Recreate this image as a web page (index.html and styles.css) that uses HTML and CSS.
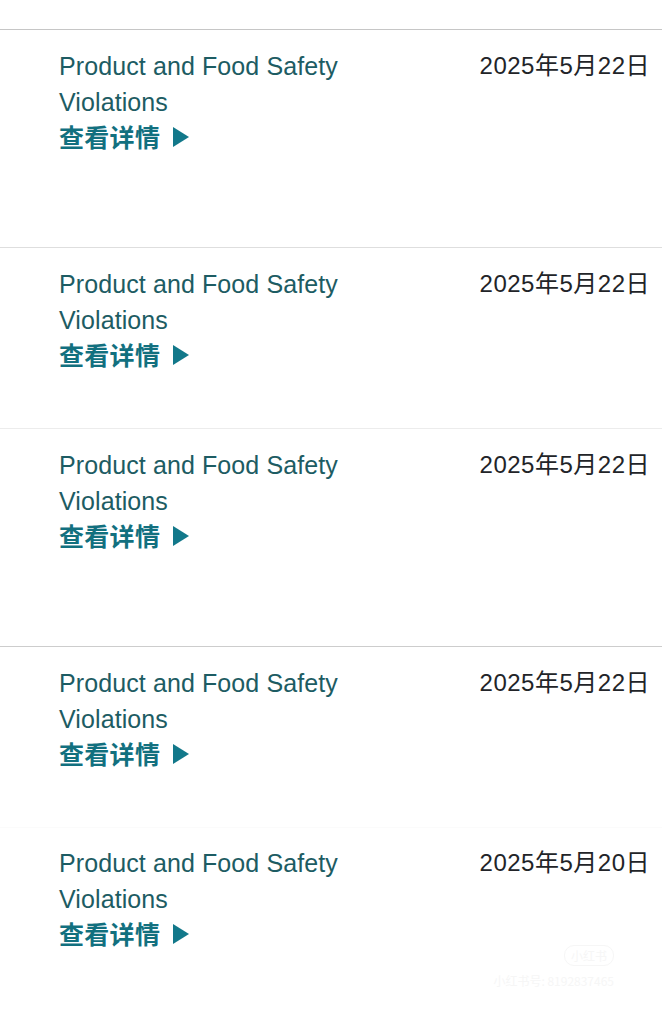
FILE: index.html
```html
<!DOCTYPE html>
<html lang="zh-CN">
<head>
<meta charset="utf-8">
<title>列表</title>
<link rel="stylesheet" href="styles.css">
</head>
<body>
<div class="page">
  <div class="top-gap"></div>
  <ul class="list">
    <li class="item item--tall item--b1">
      <div class="info">
        <div class="title">Product and Food Safety Violations</div>
        <a class="more" href="#">查看详情<svg class="arrow" viewBox="0 0 16 20" width="16" height="20"><path d="M0 0 L16 10 L0 20 Z"/></svg></a>
      </div>
      <div class="date">2025年5月22日</div>
    </li>
    <li class="item item--short item--b2">
      <div class="info">
        <div class="title">Product and Food Safety Violations</div>
        <a class="more" href="#">查看详情<svg class="arrow" viewBox="0 0 16 20" width="16" height="20"><path d="M0 0 L16 10 L0 20 Z"/></svg></a>
      </div>
      <div class="date">2025年5月22日</div>
    </li>
    <li class="item item--tall item--b3">
      <div class="info">
        <div class="title">Product and Food Safety Violations</div>
        <a class="more" href="#">查看详情<svg class="arrow" viewBox="0 0 16 20" width="16" height="20"><path d="M0 0 L16 10 L0 20 Z"/></svg></a>
      </div>
      <div class="date">2025年5月22日</div>
    </li>
    <li class="item item--short item--b4">
      <div class="info">
        <div class="title">Product and Food Safety Violations</div>
        <a class="more" href="#">查看详情<svg class="arrow" viewBox="0 0 16 20" width="16" height="20"><path d="M0 0 L16 10 L0 20 Z"/></svg></a>
      </div>
      <div class="date">2025年5月22日</div>
    </li>
    <li class="item item--last item--b5">
      <div class="info">
        <div class="title">Product and Food Safety Violations</div>
        <a class="more" href="#">查看详情<svg class="arrow" viewBox="0 0 16 20" width="16" height="20"><path d="M0 0 L16 10 L0 20 Z"/></svg></a>
      </div>
      <div class="date">2025年5月20日</div>
    </li>
  </ul>
  <div class="watermark">
    <span class="wm-logo">小红书</span>
    <span class="wm-id">小红书号: 8192837465</span>
  </div>
</div>
</body>
</html>
```
FILE: styles.css
```css
* { box-sizing: border-box; }
html, body {
  margin: 0;
  padding: 0;
  background: #ffffff;
}
body {
  font-family: "Liberation Sans", Arial, "Noto Sans CJK SC", sans-serif;
  width: 662px;
  height: 1024px;
  overflow: hidden;
}
.page {
  position: relative;
  height: 1024px;
}
.top-gap { height: 29px; }
.list {
  list-style: none;
  margin: 0;
  padding: 0;
}
.item {
  display: flex;
  justify-content: space-between;
  align-items: flex-start;
  padding: 18px 12px 0 59px;
  border-top: 1px solid #c8c8c8;
}
.item--tall { height: 218px; }
.item--short { height: 181px; }
.item--last { height: 196px; padding-top: 17px; }
.item--b1 { border-top-color: #c6c6c6; }
.item--b2 { border-top-color: #dedede; }
.item--b3 { border-top-color: #ececec; }
.item--b4 { border-top-color: #cdcdcd; }
.item--b5 { border-top-color: #fbfbfb; }
.info {
  width: 300px;
  display: flex;
  flex-direction: column;
}
.title {
  font-size: 25px;
  line-height: 36px;
  color: #1d5c63;
  letter-spacing: 0.1px;
}
.more {
  display: flex;
  align-items: center;
  gap: 13px;
  height: 36px;
  margin-top: -2px;
  font-family: "Noto Sans CJK SC", sans-serif;
  font-weight: 700;
  font-size: 25px;
  color: #12707f;
  text-decoration: none;
  letter-spacing: 0.3px;
}
.arrow { fill: #12788a; margin-top: 1px; }
.date {
  font-family: "Liberation Sans", Arial, "Noto Sans CJK SC", sans-serif;
  font-size: 24px;
  line-height: 36px;
  color: #222428;
  letter-spacing: 0.5px;
  white-space: nowrap;
}
.watermark {
  position: absolute;
  right: 48px;
  top: 945px;
  display: flex;
  flex-direction: column;
  align-items: flex-end;
  gap: 6px;
  color: #f6f6f6;
  font-family: "Noto Sans CJK SC", sans-serif;
}
.wm-logo {
  font-size: 12px;
  border: 1px solid #f6f6f6;
  border-radius: 10px;
  padding: 1px 6px;
}
.wm-id { font-size: 12px; }
```
